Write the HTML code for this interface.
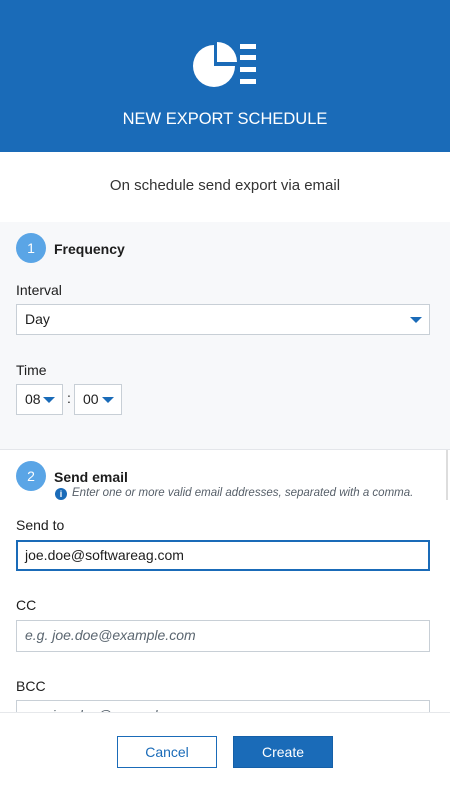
<!DOCTYPE html>
<html><head><meta charset="utf-8"><style>
*{box-sizing:border-box;margin:0;padding:0}
body{width:450px;height:792px;overflow:hidden;font-family:"Liberation Sans",sans-serif;background:#fff;position:relative;color:#1d1d1d}
.a{position:absolute}
.hdr{left:0;top:0;width:450px;height:152px;background:#1a6bb8}
.title{left:0;top:110px;width:450px;text-align:center;color:#fff;font-size:16.5px}
.sub{left:0;top:177px;width:450px;text-align:center;font-size:15px;color:#333}
.s1{left:0;top:222px;width:450px;height:228px;background:#f7f8fa;border-bottom:1px solid #e4e6ea}
.num{width:30px;height:30px;border-radius:50%;background:#5aa5e6;color:#fff;font-size:14px;text-align:center;line-height:30px}
.h{font-size:14px;font-weight:bold;color:#1d1d1d}
.lbl{font-size:14px;color:#1d1d1d}
.box{background:#fff;border:1px solid #c8cfd6;font-size:14px;padding-left:8px;line-height:29px}
.tri{position:absolute;width:0;height:0;border-left:6px solid transparent;border-right:6px solid transparent;border-top:6px solid #1a6bb8}
.btn{top:736px;width:100px;height:32px;font-size:14px;text-align:center;line-height:30px}
</style></head><body>
<div class="a hdr"></div>
<svg class="a" style="left:192px;top:40px" width="72" height="50" viewBox="0 0 72 50">
<path d="M22 5 A21 21 0 1 0 43 26 L22 26 Z" fill="#fff"/>
<path d="M25 2 A20 20 0 0 1 45 22 L25 22 Z" fill="#fff"/>
<rect x="48" y="4" width="16" height="5" fill="#fff"/>
<rect x="48" y="15" width="16" height="5" fill="#fff"/>
<rect x="48" y="27" width="16" height="5" fill="#fff"/>
<rect x="48" y="39" width="16" height="5" fill="#fff"/>
</svg>
<div class="a title">NEW EXPORT SCHEDULE</div>
<div class="a sub">On schedule send export via email</div>
<div class="a s1"></div>
<div class="a num" style="left:16px;top:233px">1</div>
<div class="a h" style="left:54px;top:241px">Frequency</div>
<div class="a lbl" style="left:16px;top:282px">Interval</div>
<div class="a box" style="left:16px;top:304px;width:414px;height:31px">Day</div>
<div class="tri" style="left:410px;top:317px"></div>
<div class="a lbl" style="left:16px;top:362px">Time</div>
<div class="a box" style="left:16px;top:384px;width:47px;height:31px">08</div>
<div class="tri" style="left:43px;top:397px"></div>
<div class="a lbl" style="left:67px;top:390px">:</div>
<div class="a box" style="left:74px;top:384px;width:48px;height:31px">00</div>
<div class="tri" style="left:102px;top:397px"></div>
<div class="a num" style="left:16px;top:461px">2</div>
<div class="a h" style="left:54px;top:469px;font-weight:bold">Send email</div>
<div class="a" style="left:55px;top:488px;width:12px;height:12px;border-radius:50%;background:#1a6bb8;color:#fff;font-size:9px;font-weight:bold;text-align:center;line-height:12px">i</div>
<div class="a" style="left:72px;top:487px;font-size:11.5px;font-style:italic;color:#555e68">Enter one or more valid email addresses, separated with a comma.</div>
<div class="a lbl" style="left:16px;top:517px">Send to</div>
<div class="a box" style="left:16px;top:540px;width:414px;height:31px;border:2px solid #1a6bb8;padding-left:7px;line-height:27px">joe.doe@softwareag.com</div>
<div class="a lbl" style="left:16px;top:597px">CC</div>
<div class="a box" style="left:16px;top:620px;width:414px;height:32px;font-style:italic;color:#5b6670">e.g. joe.doe@example.com</div>
<div class="a lbl" style="left:16px;top:678px">BCC</div>
<div class="a box" style="left:16px;top:700px;width:414px;height:32px;font-style:italic;color:#5b6670">e.g. joe.doe@example.com</div>
<div class="a" style="left:446px;top:450px;width:2px;height:50px;background:#ddd"></div>
<div class="a" style="left:0;top:712px;width:450px;height:80px;background:#fff;border-top:1px solid #e6e8eb"></div>
<div class="a btn" style="left:117px;border:1px solid #1a6bb8;color:#1a6bb8;background:#fff">Cancel</div>
<div class="a btn" style="left:233px;background:#1a6bb8;color:#fff;border:1px solid #1560a8">Create</div>
</body></html>
